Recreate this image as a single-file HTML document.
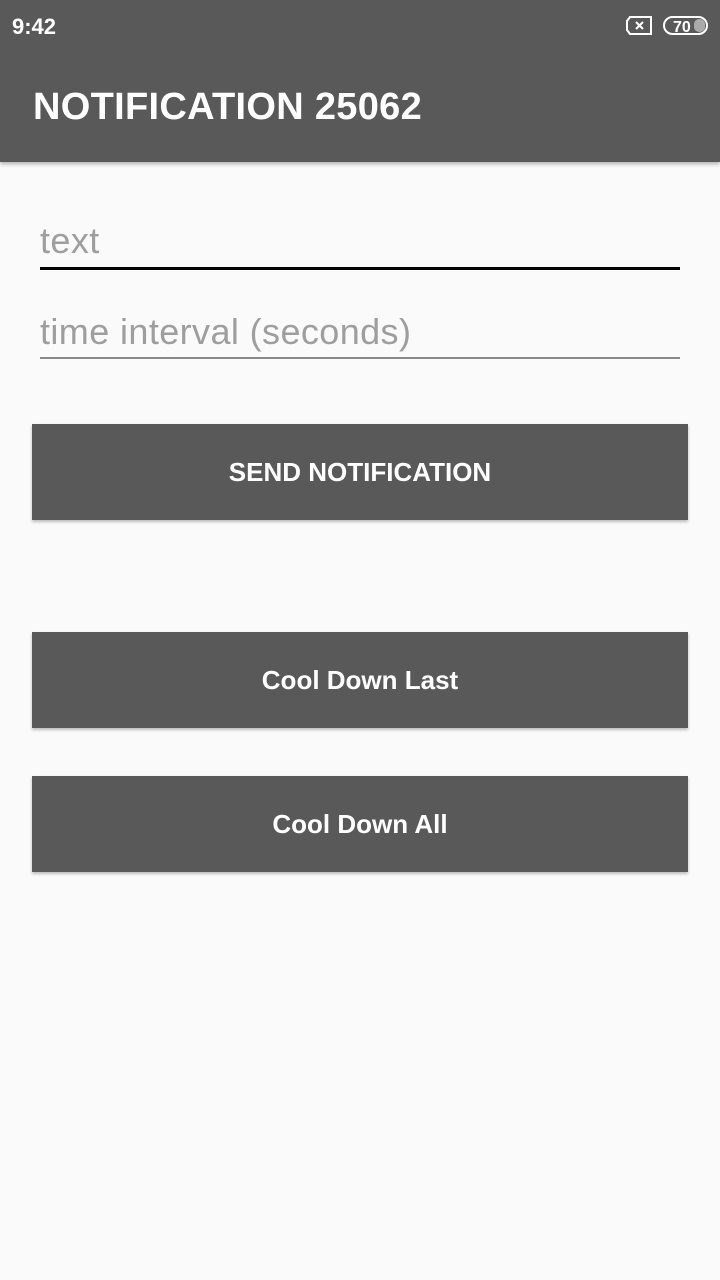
<!DOCTYPE html>
<html><head><style>
body{margin:0;width:720px;height:1280px;background:#fafafa;font-family:"Liberation Sans",Roboto,sans-serif;position:relative;overflow:hidden}
.bar{position:absolute;left:0;top:0;width:720px;height:162px;background:#595959;box-shadow:0 2px 4px rgba(0,0,0,.3)}
.t{position:absolute;color:#fff}
.btn{position:absolute;left:32px;width:656px;height:96px;background:#595959;color:#fff;font-size:26px;font-weight:bold;display:flex;align-items:center;justify-content:center;box-shadow:0 2px 3px rgba(0,0,0,.25)}
.ph{position:absolute;left:40px;color:#9e9e9e;font-size:36px;letter-spacing:0.4px}
</style></head><body>
<div class="bar"></div>
<div class="t" style="left:12px;top:14px;font-size:22px;font-weight:bold">9:42</div>
<svg style="position:absolute;left:626px;top:15px" width="84" height="22">
<path d="M4 2H25V19H4L1 15V6Z" fill="none" stroke="#fff" stroke-width="2"/>
<path d="M10 7L17 14M17 7L10 14" stroke="#fff" stroke-width="2"/>
<rect x="38" y="2" width="43" height="17" rx="8.5" fill="none" stroke="#fff" stroke-width="2"/>
<rect x="68" y="4" width="11" height="13" rx="5" fill="#aaa"/>
<text x="47" y="17" fill="#fff" font-size="16" font-weight="bold" font-family="Liberation Sans">70</text>
</svg>
<div class="t" style="left:33px;top:86px;font-size:38px;font-weight:bold;letter-spacing:0.3px">NOTIFICATION 25062</div>
<div class="ph" style="top:220px">text</div>
<div style="position:absolute;left:40px;top:267px;width:640px;height:3px;background:#000"></div>
<div class="ph" style="top:311px">time interval (seconds)</div>
<div style="position:absolute;left:40px;top:357px;width:640px;height:2px;background:#888"></div>
<div class="btn" style="top:424px">SEND NOTIFICATION</div>
<div class="btn" style="top:632px">Cool Down Last</div>
<div class="btn" style="top:776px">Cool Down All</div>
</body></html>
